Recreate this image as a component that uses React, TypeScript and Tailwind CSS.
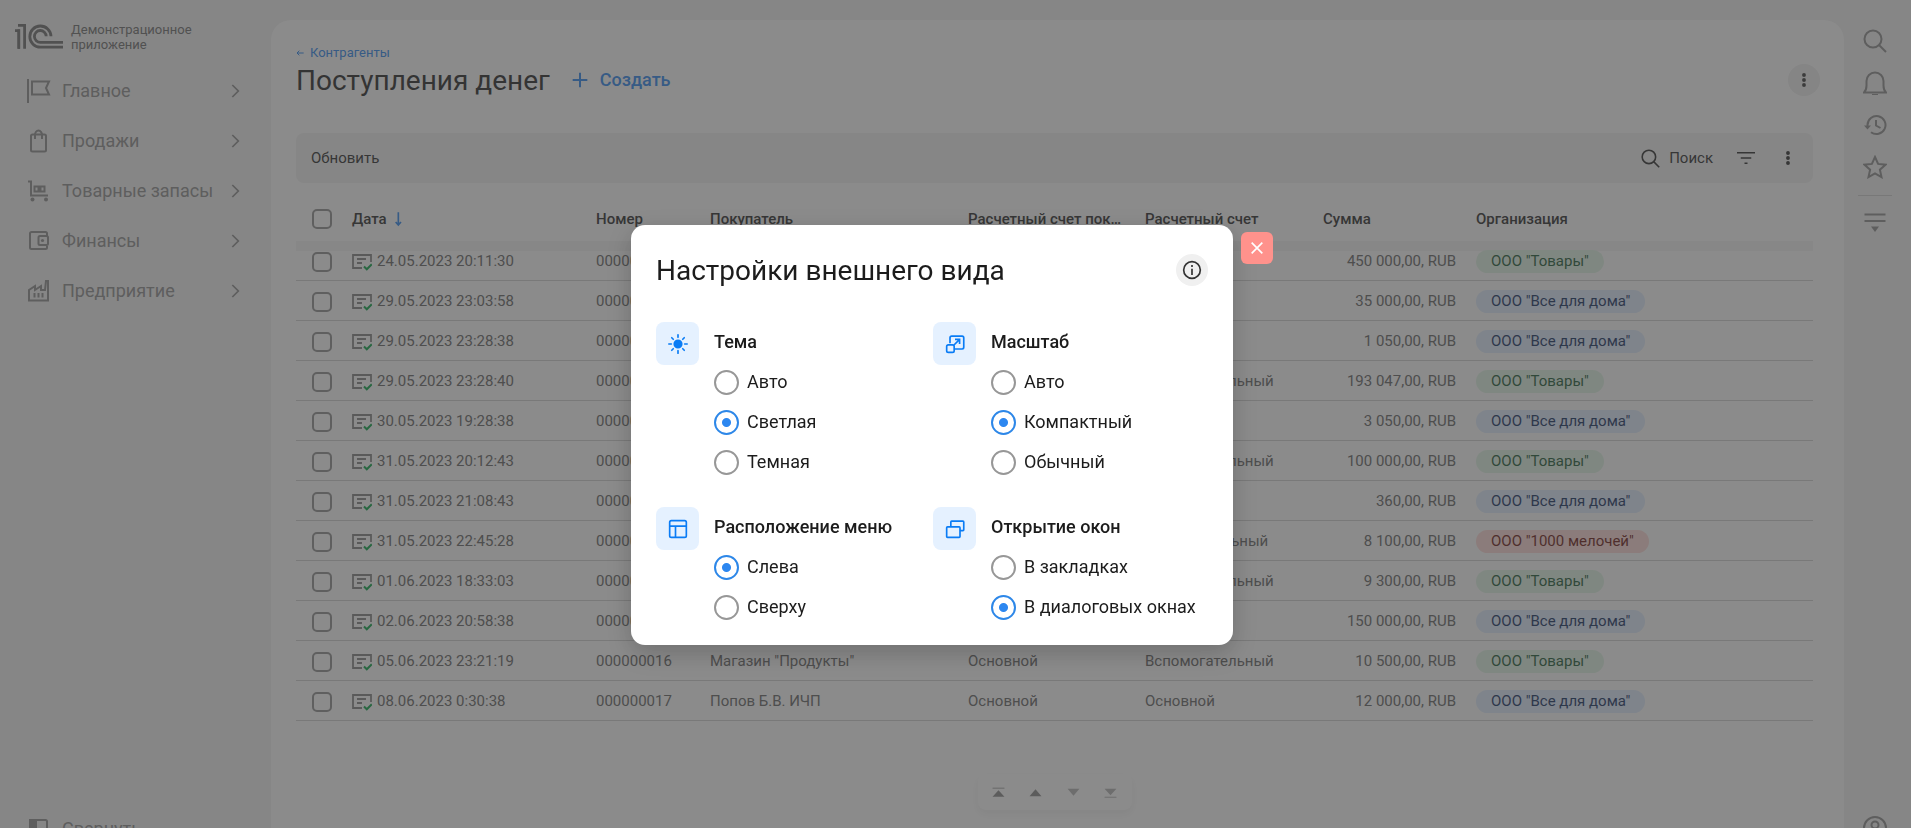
import React from "react";

type OrgKind = "goods" | "home" | "misc";

type Receipt = {
  date: string;
  num: string;
  buyer: string;
  buyerAccount: string;
  account: string;
  sum: string;
  org: OrgKind;
};

const ORGS: Record<OrgKind, { title: string; className: string }> = {
  goods: { title: 'ООО "Товары"', className: "bg-[#e2f6e7] text-[#1c5a35]" },
  home: { title: 'ООО "Все для дома"', className: "bg-[#e0edff] text-[#16305f]" },
  misc: { title: 'ООО "1000 мелочей"', className: "bg-[#ffdad6] text-[#6b1712]" },
};

const RECEIPTS: Receipt[] = [
  { date: "24.05.2023 20:11:30", num: "000000006", buyer: 'Магазин "Продукты"', buyerAccount: "Основной", account: "Основной", sum: "450 000,00, RUB", org: "goods" },
  { date: "29.05.2023 23:03:58", num: "000000007", buyer: "Попов Б.В. ИЧП", buyerAccount: "Основной", account: "Основной", sum: "35 000,00, RUB", org: "home" },
  { date: "29.05.2023 23:28:38", num: "000000008", buyer: "Попов Б.В. ИЧП", buyerAccount: "Основной", account: "Основной", sum: "1 050,00, RUB", org: "home" },
  { date: "29.05.2023 23:28:40", num: "000000009", buyer: 'Магазин "Продукты"', buyerAccount: "Основной", account: "Вспомогательный", sum: "193 047,00, RUB", org: "goods" },
  { date: "30.05.2023 19:28:38", num: "000000010", buyer: "Попов Б.В. ИЧП", buyerAccount: "Основной", account: "Основной", sum: "3 050,00, RUB", org: "home" },
  { date: "31.05.2023 20:12:43", num: "000000011", buyer: 'Магазин "Продукты"', buyerAccount: "Основной", account: "Вспомогательный", sum: "100 000,00, RUB", org: "goods" },
  { date: "31.05.2023 21:08:43", num: "000000012", buyer: "Попов Б.В. ИЧП", buyerAccount: "Основной", account: "Основной", sum: "360,00, RUB", org: "home" },
  { date: "31.05.2023 22:45:28", num: "000000013", buyer: 'Магазин "Продукты"', buyerAccount: "Основной", account: "Дополнительный", sum: "8 100,00, RUB", org: "misc" },
  { date: "01.06.2023 18:33:03", num: "000000014", buyer: 'Магазин "Продукты"', buyerAccount: "Основной", account: "Вспомогательный", sum: "9 300,00, RUB", org: "goods" },
  { date: "02.06.2023 20:58:38", num: "000000015", buyer: "Попов Б.В. ИЧП", buyerAccount: "Основной", account: "Основной", sum: "150 000,00, RUB", org: "home" },
  { date: "05.06.2023 23:21:19", num: "000000016", buyer: 'Магазин "Продукты"', buyerAccount: "Основной", account: "Вспомогательный", sum: "10 500,00, RUB", org: "goods" },
  { date: "08.06.2023 0:30:38", num: "000000017", buyer: "Попов Б.В. ИЧП", buyerAccount: "Основной", account: "Основной", sum: "12 000,00, RUB", org: "home" },
];

type IconProps = { children: React.ReactNode; size?: number; width?: number; className?: string };

const Icon = ({ children, size = 24, width = 2, className }: IconProps) => (
  <svg
    width={size}
    height={size}
    viewBox="0 0 24 24"
    fill="none"
    stroke="currentColor"
    strokeWidth={width}
    className={className}
    aria-hidden="true"
  >
    {children}
  </svg>
);

const Logo = () => (
  <svg width="48" height="26" viewBox="0 0 48 26" fill="none" stroke="currentColor" aria-hidden="true" className="shrink-0">
    <path d="M0 6.7H3.8V24.8M3 1.4H9.6V24.8" strokeWidth="2.8" />
    <path d="M3.8 5.4V24.8" strokeWidth="2.4" />
    <path d="M36 12.3A10.6 10.6 0 1 0 25.5 23.2H48" strokeWidth="2.8" />
    <path d="M31.2 12.3A5.9 5.9 0 1 0 25.5 18.3H48" strokeWidth="2.8" />
  </svg>
);

const MoreIcon = () => (
  <Icon size={20} className="shrink-0">
    <g fill="currentColor" stroke="none">
      <circle cx="12" cy="6" r="2.3" />
      <circle cx="12" cy="12" r="2.3" />
      <circle cx="12" cy="18" r="2.3" />
    </g>
  </Icon>
);

const SearchShape = () => (
  <>
    <circle cx="10" cy="10" r="8.5" />
    <path d="M16 16l7 7" />
  </>
);

const MENU = [
  {
    title: "Главное",
    icon: <path d="M1 0v24M5 2.5h17l-3 6.5 3 6.5H5z" />,
  },
  {
    title: "Продажи",
    icon: (
      <>
        <rect x="4" y="5.5" width="15" height="17" rx="1.5" />
        <path d="M8 10V6a3.500 4.500 0 0 1 7 0V10" />
      </>
    ),
  },
  {
    title: "Товарные запасы",
    icon: (
      <>
        <path d="M1 2.500h3V16.500h17" />
        <path d="M7.500 7.500h4v5h-4zM13.500 7.500h4v5h-4z" />
        <circle cx="5.500" cy="20.500" r="2" fill="currentColor" stroke="none" />
        <circle cx="19" cy="20.500" r="2" fill="currentColor" stroke="none" />
      </>
    ),
  },
  {
    title: "Финансы",
    icon: (
      <>
        <path d="M20 7V4.500A1.500 1.500 0 0 0 18.500 3h-14A1.500 1.500 0 0 0 3 4.500v14A1.500 1.500 0 0 0 4.500 20h14a1.500 1.500 0 0 0 1.500-1.500V17" />
        <rect x="11.500" y="7" width="9.500" height="9" rx="1.500" />
        <circle cx="15.500" cy="11.500" r="1.600" fill="currentColor" stroke="none" />
      </>
    ),
  },
  {
    title: "Предприятие",
    icon: (
      <>
        <path d="M2 21.500V11l6-4v4l6-4v4h4L19 2h2V21.500z" />
        <path d="M7.500 14v4.500M11.500 14v4.500M15.500 14v4.500" />
      </>
    ),
  },
];

const Sidebar = () => (
  <aside className="flex w-[271px] shrink-0 flex-col text-[#8e8e8e]">
    <div className="flex h-[66px] items-center gap-2 pl-[15px] pt-2 text-[#6e6e6e]">
      <Logo />
      <span className="w-36 text-[13px] leading-[15px]">Демонстрационное приложение</span>
    </div>
    <nav className="flex-1">
      {MENU.map((item) => (
        <a key={item.title} href="#" className="flex h-[50px] items-center gap-[11px] pl-[27px] pr-[28px] text-lg">
          <Icon>{item.icon}</Icon>
          <span className="flex-1 whitespace-nowrap">{item.title}</span>
          <Icon size={16} width={3}>
            <path d="M8 3l9 9-9 9" strokeWidth="2.5" />
          </Icon>
        </a>
      ))}
    </nav>
    <button type="button" className="flex h-[50px] items-center gap-[11px] pl-[27px] text-lg">
      <Icon>
        <rect x="3" y="3" width="17" height="17" rx="1.5" />
        <path d="M3 3h6v17H3z" fill="currentColor" />
      </Icon>
      Свернуть
    </button>
  </aside>
);

const TOOLS = [
  { title: "Поиск", icon: <SearchShape /> },
  {
    title: "Уведомления",
    icon: (
      <>
        <path d="M1 21.500h22c-2-2-2.500-4-2.500-7V10a8.500 8.500 0 0 0-17 0v4.500c0 3-.5 5-2.500 7z" />
        <path d="M9 24h6" />
      </>
    ),
  },
  {
    title: "История",
    icon: (
      <>
        <path d="M4.500 13.500V12A9 9 0 1 1 8 19.200" />
        <path d="M13 7v5.500l4.500 2.500" />
        <path d="M1 12.500h7L4.500 16.500z" fill="currentColor" stroke="none" />
      </>
    ),
  },
  {
    title: "Избранное",
    icon: <path d="M12 2l3.100 6.900 7.400.8-5.600 5 1.600 7.400L12 18.300l-6.500 3.800 1.600-7.400-5.600-5 7.400-.8z" />,
  },
];

const ToolRail = () => (
  <aside className="flex w-[67px] shrink-0 flex-col items-center pr-[6px] text-[#8e8e8e]">
    <div className="flex flex-col pt-5">
      {TOOLS.map((tool) => (
        <button key={tool.title} type="button" aria-label={tool.title} className="flex h-[42px] w-9 items-center justify-center">
          <Icon>{tool.icon}</Icon>
        </button>
      ))}
    </div>
    <div className="mt-[7px] h-px w-[34px] bg-[#cfcfcf]" />
    <button type="button" aria-label="Настройка панели" className="mt-[14px]">
      <Icon>
        <path d="M1.500 4.500h21M1.500 11h21" />
        <path d="M8 16.500h8L12 22z" fill="currentColor" stroke="none" />
      </Icon>
    </button>
    <button type="button" aria-label="Пользователь" className="mb-[14px] mt-auto">
      <Icon>
        <circle cx="12" cy="12" r="11" />
        <circle cx="12" cy="9" r="3.500" />
        <path d="M5 19.500c1.500-3 4-4.500 7-4.500s5.500 1.500 7 4.500" />
      </Icon>
    </button>
  </aside>
);

const Tick = ({ label }: { label: string }) => (
  <input
    type="checkbox"
    aria-label={label}
    className="block size-5 appearance-none rounded-[5px] border-2 border-[#929292] checked:bg-[#2d87f0]"
  />
);

const DocIcon = () => (
  <svg width="20" height="18" viewBox="0 0 20 18" fill="none" stroke="currentColor" strokeWidth="1.8" aria-hidden="true" className="shrink-0 text-[#868686]">
    <path d="M10 15H1V2h18V9M5 6h9M5 10h5" />
    <path d="M12 13.500l2.800 2.800 5-5" stroke="#0ba548" strokeWidth="2" />
  </svg>
);

const ReceiptsTable = () => (
  <table className="mt-[14px] w-full table-fixed border-separate border-spacing-0 text-left text-[15px]">
    <colgroup>
      <col className="w-12" />
      <col className="w-[244px]" />
      <col className="w-[114px]" />
      <col className="w-[258px]" />
      <col className="w-[177px]" />
      <col className="w-[178px]" />
      <col className="w-[149px]" />
      <col />
    </colgroup>
    <thead className="text-[#2c2c2c] shadow-[0_10px_1px_0_rgba(0,0,0,0.04)]">
      <tr className="h-11 [&>th]:px-2 [&>th]:font-medium">
        <th>
          <div className="pl-2">
            <Tick label="Выбрать все" />
          </div>
        </th>
        <th>
          <span className="flex items-center gap-1">
            Дата
            <Icon size={16} width={3} className="text-[#2d87f0]">
              <path d="M11 2v19M7 16.500l4 4.500 4-4.500" strokeWidth="2.5" />
            </Icon>
          </span>
        </th>
        <th>Номер</th>
        <th>Покупатель</th>
        <th>
          <div className="truncate pr-1">Расчетный счет покупателя</div>
        </th>
        <th>Расчетный счет</th>
        <th>Сумма</th>
        <th>
          <span className="pl-1">Организация</span>
        </th>
      </tr>
    </thead>
    <tbody className="text-[#666666]">
      {RECEIPTS.map((row) => (
        <tr key={row.num} className="h-10 [&>td]:border-b [&>td]:border-[#d2d2d2] [&>td]:px-2 [&>td]:pt-0.5">
          <td>
            <div className="pl-2">
              <Tick label={row.num} />
            </div>
          </td>
          <td>
            <span className="flex items-center gap-[5px]">
              <DocIcon />
              {row.date}
            </span>
          </td>
          <td>{row.num}</td>
          <td>{row.buyer}</td>
          <td>{row.buyerAccount}</td>
          <td>{row.account}</td>
          <td className="text-right">{row.sum}</td>
          <td>
            <div className="flex pl-1">
              <span className={`rounded-full px-[15px] leading-[23px] ${ORGS[row.org].className}`}>{ORGS[row.org].title}</span>
            </div>
          </td>
        </tr>
      ))}
    </tbody>
  </table>
);

const PAGER = [
  { title: "В начало", className: "text-[#8a8a8a]", icon: <path d="M1 3h22v1.500H1zM1 20h22L12 8z" /> },
  { title: "Назад", className: "text-[#8a8a8a]", icon: <path d="M1 19h22L12 6z" /> },
  { title: "Вперед", className: "text-[#b5b5b5]", icon: <path d="M1 5h22L12 18z" /> },
  { title: "В конец", className: "text-[#b5b5b5]", icon: <path d="M1 5h22L12 17zM1 20h22v1.500H1z" /> },
];

const Content = () => (
  <main className="mt-5 flex min-w-0 flex-1 flex-col rounded-t-[20px] bg-white pl-[25px] pr-[31px]">
    <a href="#" className="mt-6 flex items-center gap-1.5 text-[13px] leading-[18px] text-[#2d87f0]">
      <Icon size={8} width={3}>
        <path d="M23 12H3M10 5l-7 7 7 7" />
      </Icon>
      Контрагенты
    </a>
    <div className="flex h-9 items-center">
      <h1 className="pt-0.5 text-[28px] text-[#262626]">Поступления денег</h1>
      <button type="button" className="ml-[22px] flex items-center gap-3 text-lg font-medium text-[#2d87f0]">
        <Icon size={16} width={3}>
          <path d="M12 1v22M1 12h22" />
        </Icon>
        Создать
      </button>
      <button type="button" aria-label="Еще" className="-mr-[7px] ml-auto flex size-8 items-center justify-center rounded-full bg-[#f0f0f0] text-[#3b3b3b]">
        <MoreIcon />
      </button>
    </div>
    <div className="mt-[35px] flex h-[50px] items-center rounded-lg bg-[#f2f2f2] px-[15px] text-[15px] text-[#2c2c2c]">
      <button type="button">Обновить</button>
      <button type="button" className="ml-auto flex items-center gap-[9px]">
        <Icon size={19}>
          <SearchShape />
        </Icon>
        Поиск
      </button>
      <button type="button" aria-label="Фильтр" className="ml-6">
        <Icon size={18}>
          <path d="M0 5h24M5 12h14M10 19h4" />
        </Icon>
      </button>
      <button type="button" aria-label="Еще" className="ml-[23px]">
        <MoreIcon />
      </button>
    </div>
    <ReceiptsTable />
    <div className="mt-[53px] flex h-9 w-[154px] items-center justify-between self-center rounded-lg px-[14px] shadow-[0_4px_8px_0_rgba(0,0,0,0.06)]">
      {PAGER.map((item) => (
        <button key={item.title} type="button" aria-label={item.title} className={item.className}>
          <svg width="13" height="13" viewBox="0 0 24 24" fill="currentColor" aria-hidden="true">
            {item.icon}
          </svg>
        </button>
      ))}
    </div>
  </main>
);

const SETTINGS = [
  {
    id: "theme",
    title: "Тема",
    options: ["Авто", "Светлая", "Темная"],
    selected: "Светлая",
    icon: (
      <>
        <circle cx="12" cy="12" r="4.500" fill="currentColor" />
        <path
          d="M12 1v3M12 20v3M1 12h3M20 12h3M4.500 4.500l1.800 1.800M17.700 17.700l1.800 1.800M4.500 19.500l1.800-1.800M17.700 6.300l1.800-1.800"
          strokeLinecap="round"
        />
      </>
    ),
  },
  {
    id: "scale",
    title: "Масштаб",
    options: ["Авто", "Компактный", "Обычный"],
    selected: "Компактный",
    icon: (
      <>
        <path d="M6 11V4.500A2 2 0 0 1 8 2.500h12.500a2 2 0 0 1 2 2V16a2 2 0 0 1-2 2H12" />
        <rect x="2" y="13" width="9" height="9" rx="2" />
        <path d="M10.500 13.500l7-7M12 6.500h5.500V12" />
      </>
    ),
  },
  {
    id: "menu",
    title: "Расположение меню",
    options: ["Слева", "Сверху"],
    selected: "Слева",
    icon: (
      <>
        <rect x="2" y="2" width="20" height="20" rx="2" />
        <path d="M2 8.500h20M9 8.500V22" />
      </>
    ),
  },
  {
    id: "windows",
    title: "Открытие окон",
    options: ["В закладках", "В диалоговых окнах"],
    selected: "В диалоговых окнах",
    icon: (
      <>
        <path d="M7 9V3.500a1 1 0 0 1 1-1h13.500a1 1 0 0 1 1 1V13a1 1 0 0 1-1 1H18" />
        <rect x="2" y="9.500" width="16" height="12.500" rx="1" />
      </>
    ),
  },
];

const AppearanceDialog = () => (
  <div className="fixed inset-0 flex items-start justify-center gap-2 bg-[#3e3e3e]/60 pr-[7px] pt-[225px]">
    <div
      role="dialog"
      aria-labelledby="dialog-title"
      className="w-[602px] rounded-[14px] bg-white px-[25px] pb-[18px] pt-7 text-[#1c1c1c] shadow-[0_8px_24px_rgba(0,0,0,0.2)]"
    >
      <div className="flex h-[33px] items-center justify-between">
        <h2 id="dialog-title" className="pt-0.5 text-[28px]">Настройки внешнего вида</h2>
        <button type="button" aria-label="Справка" className="flex size-8 items-center justify-center rounded-full bg-[#f0f0f0] text-[#333333]">
          <Icon size={20}>
            <circle cx="12" cy="12" r="10" />
            <path d="M12 10.500V18M12 6v2.500" />
          </Icon>
        </button>
      </div>
      <div className="mt-9 grid grid-cols-[277px_1fr] gap-y-[25px]">
        {SETTINGS.map((group) => (
          <fieldset key={group.id} aria-labelledby={`${group.id}-title`} className="flex gap-[15px]">
            <div className="flex size-[43px] shrink-0 items-center justify-center rounded-lg bg-[#e5f1ff] text-[#0a7cf5]">
              <Icon size={20}>{group.icon}</Icon>
            </div>
            <div className="text-lg leading-10">
              <div id={`${group.id}-title`} className="font-medium">{group.title}</div>
              {group.options.map((option) => (
                <label key={option} className="flex h-10 items-center gap-2 whitespace-nowrap">
                  <input
                    type="radio"
                    name={group.id}
                    defaultChecked={option === group.selected}
                    className="size-[25px] shrink-0 appearance-none rounded-full border-2 border-[#979797] checked:border-[#2d87e8] checked:bg-[radial-gradient(circle,#2d87f0_4px,transparent_5px)]"
                  />
                  {option}
                </label>
              ))}
            </div>
          </fieldset>
        ))}
      </div>
    </div>
    <button type="button" aria-label="Закрыть" className="mt-[7px] flex size-8 items-center justify-center rounded-md bg-[#ff928c] text-white">
      <Icon size={16}>
        <path d="M4 4l16 16M20 4L4 20" strokeWidth="2.500" />
      </Icon>
    </button>
  </div>
);

export default function App() {
  return (
    <div className="h-screen overflow-hidden bg-[#f2f2f2] font-['Roboto',sans-serif]">
      <div className="flex h-[calc(100%+26px)]">
        <Sidebar />
        <Content />
        <ToolRail />
      </div>
      <AppearanceDialog />
    </div>
  );
}
